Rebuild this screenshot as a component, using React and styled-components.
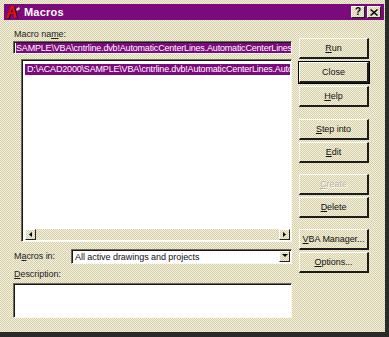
import React from 'react'
import styled, { createGlobalStyle } from 'styled-components'

const Global = createGlobalStyle`
  html, body { margin: 0; padding: 0; background: #fff; }
  body { font-family: "Liberation Sans", Arial, sans-serif; font-size: 9px; letter-spacing: -0.05px; }
`;

const dither = `
  background-color: #e4e0c6;
  background-image:
    repeating-conic-gradient(#f8f4c8 0 25%, #d0ccc0 0 50%);
  background-size: 2px 2px;
`;

const Window = styled.div`
  width: 389px;
  height: 337px;
  box-sizing: border-box;
  ${dither}
  border-right: 4px solid #2a2a2a;
  border-bottom: 5px solid #2a2a2a;
  padding: 4px 0 0 4px;
  display: flex;
  flex-direction: column;
`;

const TitleBar = styled.div`
  height: 16px;
  margin-right: 1px;
  background: #7d0a7d;
  display: flex;
  align-items: center;
  padding: 0 3px 0 1px;
  gap: 3px;
`;

const Title = styled.span`
  color: #fff;
  font-weight: bold;
  font-size: 11px;
  flex: 1;
  letter-spacing: 0.2px;
`;

const TitleButton = styled.div`
  width: 14px;
  height: 12px;
  box-sizing: border-box;
  ${dither}
  border-top: 1px solid #fff;
  border-left: 1px solid #fff;
  border-right: 1px solid #222;
  border-bottom: 1px solid #222;
  display: flex;
  align-items: center;
  justify-content: center;
  font-weight: bold;
  font-size: 10px;
  line-height: 1;
  color: #000;
  margin-left: ${({ gap }) => gap || 0}px;
`;

const Body = styled.div`
  display: flex;
  padding: 8px 0 0 9px;
  gap: 7px;
`;

const Left = styled.div`
  width: 279px;
  display: flex;
  flex-direction: column;
`;

const Label = styled.div`
  color: #222;
  height: 13px;
  line-height: 13px;
  padding-left: 1px;
  u { text-decoration: underline; }
`;

const Sunken = styled.div`
  box-sizing: border-box;
  background: #fff;
  border-top: 1px solid #6a6a5a;
  border-left: 1px solid #6a6a5a;
  border-right: 1px solid #f8f8f0;
  border-bottom: 1px solid #f8f8f0;
  box-shadow: inset 1px 1px 0 #1a1a1a;
`;

const NameInput = styled(Sunken)`
  height: 13px;
  padding: 1px 0 0 2px;
  overflow: hidden;
  white-space: nowrap;
`;

const Selected = styled.span`
  background: #7d0a7d;
  color: #fff;
  line-height: 10px;
  display: inline-block;
  padding-right: 1px;
  letter-spacing: -0.18px;
`;

const ListBox = styled(Sunken)`
  margin: 5px 0 0 8px;
  height: 183px;
  display: flex;
  flex-direction: column;
  padding: 4px 1px 1px 3px;
`;

const ListItems = styled.div`
  flex: 1;
  overflow: hidden;
`;

const ListRow = styled.div`
  height: 11px;
  line-height: 11px;
  white-space: nowrap;
  overflow: hidden;
  padding-left: 2px;
  letter-spacing: -0.18px;
  background: ${({ active }) => (active ? '#7d0a7d' : 'transparent')};
  color: ${({ active }) => (active ? '#fff' : '#000')};
`;

const HScroll = styled.div`
  height: 11px;
  ${dither}
  display: flex;
  justify-content: space-between;
`;

const ArrowBtn = styled.div`
  width: 11px;
  height: 11px;
  box-sizing: border-box;
  ${dither}
  border-top: 1px solid #fff;
  border-left: 1px solid #fff;
  border-right: 1px solid #222;
  border-bottom: 1px solid #222;
  display: flex;
  align-items: center;
  justify-content: center;
`;

const Row = styled.div`
  display: flex;
  align-items: center;
  margin-top: 7px;
`;

const RowLabel = styled(Label)`
  width: 57px;
`;

const Combo = styled(Sunken)`
  flex: 1;
  height: 15px;
  display: flex;
  align-items: center;
  padding: 0 1px 0 3px;
  color: #111;
  span { flex: 1; }
`;

const DescLabel = styled(Label)`
  margin-top: 4px;
`;

const DescBox = styled(Sunken)`
  height: 35px;
  margin-top: 2px;
`;

const Right = styled.div`
  width: 70px;
  display: flex;
  flex-direction: column;
  padding-top: 10px;
`;

const Button = styled.div`
  height: 21px;
  box-sizing: border-box;
  ${dither}
  border-top: 1px solid #fbfbf0;
  border-left: 1px solid #fbfbf0;
  border-right: 2px solid #1c1c1c;
  border-bottom: 2px solid #1c1c1c;
  outline: ${({ primary }) => (primary ? '1px solid #000' : 'none')};
  display: flex;
  align-items: center;
  justify-content: center;
  white-space: nowrap;
  color: ${({ disabled }) => (disabled ? '#b8b4a0' : '#111')};
  text-shadow: ${({ disabled }) => (disabled ? '1px 1px 0 #fff' : 'none')};
  margin-top: ${({ mt }) => mt}px;
  u { text-decoration: underline; }
`;

function Arrow({ dir }) {
  const d = {
    left: 'M4 1 L1 3.5 L4 6 Z',
    right: 'M1 1 L4 3.5 L1 6 Z',
    down: 'M0 1 L6 1 L3 4 Z',
  }[dir]
  return (
    <svg width={dir === 'down' ? 6 : 5} height="7" viewBox={dir === 'down' ? '0 0 6 7' : '0 0 5 7'}>
      <path d={d} fill="#000" />
    </svg>
  )
}

function AcadIcon() {
  const a = 'M1 13 L6 1 L9 1 L12 13 L9.5 13 L8.6 9.5 L5 9.5 L3.8 13 Z M5.6 7.6 L8.1 7.6 L7.2 3.6 Z'
  return (
    <svg width="16" height="14" viewBox="0 0 16 14">
      <path d={a} fill="#111" transform="translate(1 0.6)" />
      <path d={a} fill="#e01010" />
      <path d="M11 4 L14 2 L15 4 L12 6 Z" fill="#f0e8a0" />
    </svg>
  )
}

export default function App() {
  return (
    <>
      <Global />
      <Window>
        <TitleBar>
          <AcadIcon />
          <Title>Macros</Title>
          <TitleButton>?</TitleButton>
          <TitleButton gap={-1}>
            <svg width="8" height="7" viewBox="0 0 8 7">
              <path d="M1 0 L4 2.6 L7 0 L8 1 L5 3.5 L8 6 L7 7 L4 4.4 L1 7 L0 6 L3 3.5 L0 1 Z" fill="#000" />
            </svg>
          </TitleButton>
        </TitleBar>
        <Body>
          <Left>
            <Label>Macro na<u>m</u>e:</Label>
            <NameInput>
              <Selected>SAMPLE\VBA\cntrline.dvb!AutomaticCenterLines.AutomaticCenterLines</Selected>
            </NameInput>
            <ListBox>
              <ListItems>
                <ListRow active>D:\ACAD2000\SAMPLE\VBA\cntrline.dvb!AutomaticCenterLines.AutomaticCenterLines</ListRow>
              </ListItems>
              <HScroll>
                <ArrowBtn><Arrow dir="left" /></ArrowBtn>
                <ArrowBtn><Arrow dir="right" /></ArrowBtn>
              </HScroll>
            </ListBox>
            <Row>
              <RowLabel>M<u>a</u>cros in:</RowLabel>
              <Combo>
                <span>All active drawings and projects</span>
                <ArrowBtn><Arrow dir="down" /></ArrowBtn>
              </Combo>
            </Row>
            <DescLabel><u>D</u>escription:</DescLabel>
            <DescBox />
          </Left>
          <Right>
            <Button mt={0}><span><u>R</u>un</span></Button>
            <Button mt={3} primary>Close</Button>
            <Button mt={3}><span><u>H</u>elp</span></Button>
            <Button mt={12}><span><u>S</u>tep into</span></Button>
            <Button mt={2}><span><u>E</u>dit</span></Button>
            <Button mt={11} disabled><span><u>C</u>reate</span></Button>
            <Button mt={2}><span><u>D</u>elete</span></Button>
            <Button mt={11}><span><u>V</u>BA Manager...</span></Button>
            <Button mt={2}><span><u>O</u>ptions...</span></Button>
          </Right>
        </Body>
      </Window>
    </>
  )
}
